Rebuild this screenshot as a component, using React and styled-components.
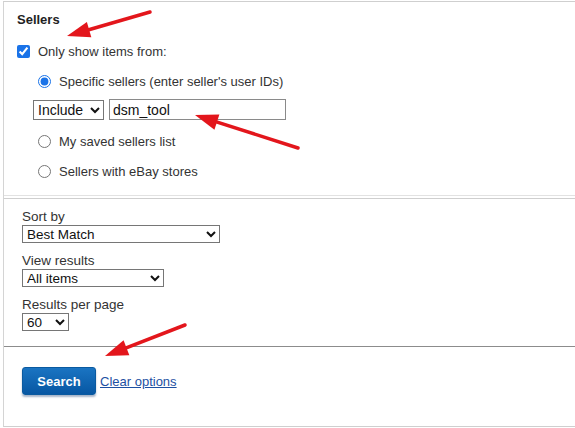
import styled, { createGlobalStyle } from 'styled-components';

const GlobalStyle = createGlobalStyle`
	html, body {
		margin: 0;
		padding: 0;
		background: #fff;
		overflow: hidden;
	}
	body {
		font-family: "Liberation Sans", Arial, sans-serif;
		font-size: 13px;
		color: #333;
	}
`;

const Page = styled.div`
	position: relative;
	width: 575px;
	height: 428px;
	overflow: hidden;
	padding-top: 1px;
	box-sizing: border-box;
`;

const Frame = styled.div`
	margin-left: 3px;
	width: 620px;
	border-left: 1px solid #d4d4d4;
	border-top: 1px solid #cfcfcf;
	border-bottom: 1px solid #cfcfcf;
	box-sizing: border-box;
	height: 426px;
	display: flex;
	flex-direction: column;
`;

const Section = styled.div`
	display: flex;
	flex-direction: column;
	padding: ${(p) => p.$padding};
	border-top: ${(p) => (p.$line ? `1px solid ${p.$line}` : 'none')};
	border-bottom: ${(p) => (p.$under ? `1px solid ${p.$under}` : 'none')};
	margin-top: ${(p) => p.$gap || '0'};
`;

const Title = styled.div`
	font-weight: bold;
	line-height: 18px;
	color: #222;
	padding-left: 13px;
`;

const Row = styled.label`
	display: flex;
	align-items: center;
	gap: 8px;
	height: 18px;
	margin-top: ${(p) => p.$top};
	padding-left: ${(p) => p.$indent};
	color: #333;
`;

const Check = styled.input`
	margin: 0;
	width: 13px;
	height: 13px;
	accent-color: #1a73e8;
`;

const InlineRow = styled.div`
	display: flex;
	align-items: center;
	gap: 5px;
	margin-top: ${(p) => p.$top};
	padding-left: 29px;
`;

const Select = styled.select`
	font-family: "Liberation Sans", Arial, sans-serif;
	font-size: ${(p) => p.$size || '13.5px'};
	color: #111;
	width: ${(p) => p.$width};
	height: ${(p) => p.$height || '18px'};
	border: 1px solid #767676;
	border-radius: 0;
	background: #fff;
	padding: 0;
	margin: 0;
`;

const TextInput = styled.input`
	font-family: "Liberation Sans", Arial, sans-serif;
	font-size: 14px;
	color: #111;
	width: 177px;
	height: 21px;
	box-sizing: border-box;
	border: 1px solid #8a8a8a;
	padding: 0 3px;
	margin: 0;
`;

const Label = styled.div`
	font-size: 13.5px;
	line-height: 16px;
	color: #333;
	margin-top: ${(p) => p.$top};
`;

const Actions = styled.div`
	display: flex;
	align-items: center;
	gap: 4px;
`;

const SearchButton = styled.button`
	font-family: "Liberation Sans", Arial, sans-serif;
	font-size: 13px;
	font-weight: bold;
	color: #fff;
	width: 74px;
	height: 28px;
	border: 1px solid #0a5aa0;
	border-radius: 3px;
	background: linear-gradient(#1a74c2, #0757a3);
	box-shadow: 0 2px 2px rgba(0, 40, 100, 0.35);
	cursor: pointer;
`;

const Link = styled.a`
	color: #1d50a2;
	text-decoration: underline;
	font-size: 13px;
	cursor: pointer;
`;

const Overlay = styled.svg`
	position: absolute;
	left: 0;
	top: 0;
	pointer-events: none;
`;

const Arrow = ({ from, to }) => {
	const dx = to[0] - from[0];
	const dy = to[1] - from[1];
	const len = Math.hypot(dx, dy);
	const ux = dx / len;
	const uy = dy / len;
	const head = 23;
	const half = 8;
	const bx = to[0] - head * ux;
	const by = to[1] - head * uy;
	const nx = -uy;
	const ny = ux;
	const pts = [
		[to[0], to[1]],
		[bx + half * nx, by + half * ny],
		[bx - half * nx, by - half * ny],
	]
		.map((p) => p.join(','))
		.join(' ');
	return (
		<g filter="url(#soft)">
			<line
				x1={from[0]}
				y1={from[1]}
				x2={bx + 3 * ux}
				y2={by + 3 * uy}
				stroke="#e3161b"
				strokeWidth="3.5"
				strokeLinecap="round"
			/>
			<polygon points={pts} fill="#e3161b" />
		</g>
	);
};

export default function App() {
	return (
		<>
			<GlobalStyle />
			<Page>
				<Frame>
					<Section $padding="9px 0 15px" $under="#e2e2e2">
						<Title>Sellers</Title>
						<Row $top="13px" $indent="13px">
							<Check type="checkbox" defaultChecked />
							Only show items from:
						</Row>
						<Row $top="12px" $indent="34px">
							<Check type="radio" name="sellers" defaultChecked />
							Specific sellers (enter seller's user IDs)
						</Row>
						<InlineRow $top="9px">
							<Select $width="71px" $height="20px" $size="14px" defaultValue="include">
								<option value="include">Include</option>
								<option value="exclude">Exclude</option>
							</Select>
							<TextInput type="text" defaultValue="dsm_tool" />
						</InlineRow>
						<Row $top="12px" $indent="34px">
							<Check type="radio" name="sellers" />
							My saved sellers list
						</Row>
						<Row $top="12px" $indent="34px">
							<Check type="radio" name="sellers" />
							Sellers with eBay stores
						</Row>
					</Section>
					<Section $padding="10px 18px 15px" $line="#cfcfcf" $gap="2px">
						<Label>Sort by</Label>
						<Select $width="198px" defaultValue="best">
							<option value="best">Best Match</option>
						</Select>
						<Label $top="10px">View results</Label>
						<Select $width="142px" defaultValue="all">
							<option value="all">All items</option>
						</Select>
						<Label $top="10px">Results per page</Label>
						<Select $width="47px" defaultValue="60">
							<option value="60">60</option>
						</Select>
					</Section>
					<Section $padding="20px 18px" $line="#8c8c8c">
						<Actions>
							<SearchButton type="button">Search</SearchButton>
							<Link>Clear options </Link>
						</Actions>
					</Section>
				</Frame>
				<Overlay width="575" height="428">
					<defs>
						<filter id="soft" x="-10%" y="-10%" width="120%" height="120%">
							<feGaussianBlur stdDeviation="0.6" />
						</filter>
					</defs>
					<Arrow from={[150, 12]} to={[67, 36]} />
					<Arrow from={[298, 148]} to={[195, 115]} />
					<Arrow from={[185, 325]} to={[105, 356]} />
				</Overlay>
			</Page>
		</>
	);
}
